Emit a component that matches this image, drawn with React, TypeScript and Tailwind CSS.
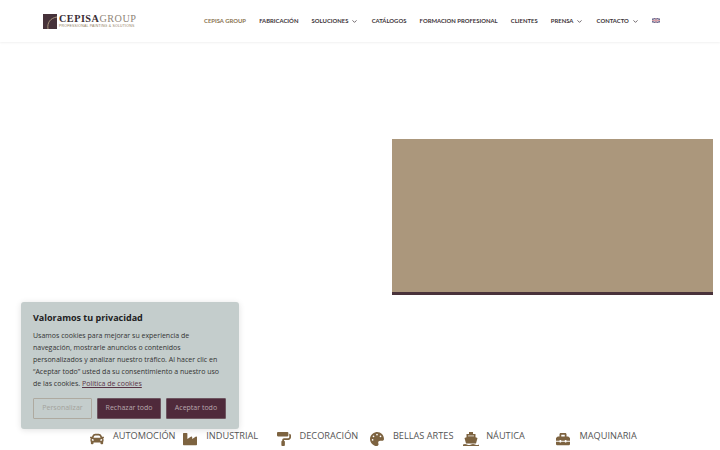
import { FaCar, FaIndustry, FaPaintRoller, FaPalette, FaToolbox } from 'react-icons/fa';
import { ChevronDown } from 'lucide-react';

const navItems = [
    { label: 'CEPISA GROUP', active: true },
    { label: 'FABRICACIÓN' },
    { label: 'SOLUCIONES', caret: true },
    { label: 'CATÁLOGOS' },
    { label: 'FORMACION PROFESIONAL' },
    { label: 'CLIENTES' },
    { label: 'PRENSA', caret: true },
    { label: 'CONTACTO', caret: true },
];

// front view of a ship, the icon packs only have it from the side
function ShipIcon({ className }: { className?: string }) {
    return (
        <svg viewBox="0 0 16 14" className={className} fill="currentColor">
            <rect x="6" y="0" width="4" height="2" />
            <path d="M3.5 2h9v3.2L14.5 6 13 11.6H3L1.5 6l2-.8z" />
            <rect x="5" y="3.4" width="6" height="1" fill="#fff" opacity="0.7" />
            <path d="M0 12.4q2-1 4 0t4 0 4 0 4 0V14H0z" />
        </svg>
    );
}

const sectors = [
    { label: 'AUTOMOCIÓN', Icon: FaCar, size: 'w-[14px] h-[14px]' },
    { label: 'INDUSTRIAL', Icon: FaIndustry, size: 'w-[14px] h-[14px]' },
    { label: 'DECORACIÓN', Icon: FaPaintRoller, size: 'w-[14px] h-[14px]' },
    { label: 'BELLAS ARTES', Icon: FaPalette, size: 'w-[14px] h-[14px]' },
    { label: 'NÁUTICA', Icon: ShipIcon, size: 'w-[16px] h-[14px]' },
    { label: 'MAQUINARIA', Icon: FaToolbox, size: 'w-[14px] h-[14px]' },
];

function Logo() {
    return (
        <div className="flex items-center gap-[2px]">
            <svg width="14" height="15" viewBox="0 0 14 15">
                <rect width="14" height="15" fill="#46323a" />
                <path d="M5 15 C4 9 7 4 14 3" fill="none" stroke="#a8967c" strokeWidth="1" />
            </svg>
            <div className="flex flex-col w-[78px]">
                <div className="font-['Liberation_Serif',serif] text-[10.2px] leading-[10px] tracking-[0.5px] whitespace-nowrap">
                    <span className="font-bold text-[#3a2c33]">CEPISA</span>
                    <span className="text-[#8f8577]">GROUP</span>
                </div>
                <div className="font-['Liberation_Sans',sans-serif] text-[3.5px] leading-[5px] tracking-[0.2px] text-[#8f7d60] whitespace-nowrap">
                    PROFESSIONAL PAINTING &amp; SOLUTIONS
                </div>
            </div>
        </div>
    );
}

function Flag() {
    return (
        <svg width="8" height="5" viewBox="0 0 8 5" className="mb-[2px]">
            <rect width="8" height="5" fill="#6a6f96" />
            <path d="M0 0 L8 5 M8 0 L0 5" stroke="#e5d5d8" strokeWidth="0.8" />
            <path d="M4 0 V5 M0 2.5 H8" stroke="#d8a0a8" strokeWidth="1.2" />
        </svg>
    );
}

function Header() {
    return (
        <header className="h-[42px] shrink-0 bg-white flex items-center pl-[43px] shadow-[0_1px_2px_rgba(0,0,0,0.06)]">
            <Logo />
            <nav className="ml-[67px] pt-[1px] flex items-center font-['Lato',sans-serif] text-[5.9px] font-bold gap-[13.2px]">
                {navItems.map((item) => (
                    <a
                        key={item.label}
                        className={`flex items-center whitespace-nowrap ${item.active ? 'text-[#8a7350]' : 'text-[#3b3237]'}`}
                    >
                        {item.label}
                        {item.caret && <ChevronDown className="ml-[3px] w-[7px] h-[7px] text-[#3b3237]" strokeWidth={2.5} />}
                    </a>
                ))}
                <Flag />
            </nav>
        </header>
    );
}

function CookieBanner() {
    return (
        <div className="absolute left-[21px] top-[302px] w-[218px] h-[127px] bg-[#c4cdcc] rounded-[3px] px-[12px] pt-[9px] font-['Open_Sans',sans-serif] shadow-[0_1px_6px_rgba(0,0,0,0.12)]">
            <h2 className="text-[9px] leading-[14px] font-bold text-[#212121]">Valoramos tu privacidad</h2>
            <p className="mt-[5px] text-[7px] leading-[12px] text-[#333]">
                Usamos cookies para mejorar su experiencia de<br />navegación, mostrarle anuncios o contenidos<br />personalizados y analizar nuestro tráfico. Al hacer clic en<br />“Aceptar todo” usted da su consentimiento a nuestro uso<br />de las cookies.{' '}
                <a className="underline text-[#5a3345]">Política de cookies</a>
            </p>
            <div className="mt-[8px] flex gap-[5px] text-[7px]">
                <button className="w-[59px] h-[21px] border-[1.5px] border-[#aeaaa0] text-[#a3a39c] rounded-[1px]">Personalizar</button>
                <button className="w-[64px] h-[21px] border-[1.5px] border-[#6d5560] bg-[#4f2a3b] text-[#b8a8ae] rounded-[1px]">Rechazar todo</button>
                <button className="w-[60px] h-[21px] border-[1.5px] border-[#6d5560] bg-[#4f2a3b] text-[#b8a8ae] rounded-[1px]">Aceptar todo</button>
            </div>
        </div>
    );
}

export default function App() {
    return (
        <div className="relative w-[720px] h-[450px] overflow-hidden bg-white flex flex-col">
            <Header />

            {/* Hero */}
            <div className="flex justify-end pr-[7px] pt-[97px]">
                <div className="w-[321.5px] h-[156px] bg-[#ab977c] border-b-[3px] border-[#49323a]" />
            </div>

            {/* Sectors */}
            <div className="mt-[134px] ml-[90px] grid grid-cols-[repeat(6,93.3px)] font-['Open_Sans',sans-serif] text-[9.2px] leading-[14px] text-[#555]">
                {sectors.map(({ label, Icon, size }) => (
                    <div key={label} className="flex items-start">
                        <span className="w-[23px] pt-[3px] shrink-0">
                            <Icon className={`${size} text-[#7d6340]`} />
                        </span>
                        <span className="whitespace-nowrap">{label}</span>
                    </div>
                ))}
            </div>

            <CookieBanner />
        </div>
    );
}
